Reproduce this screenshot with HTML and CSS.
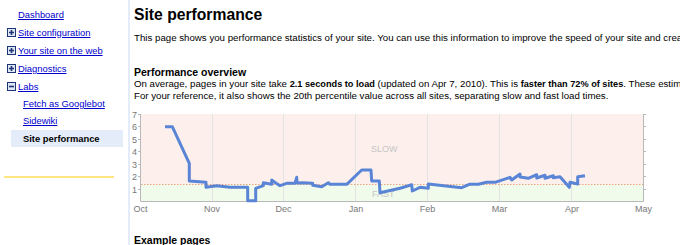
FILE: index.html
```html
<!DOCTYPE html>
<html>
<head>
<meta name="viewport" content="width=device-width, initial-scale=1">
<title>Site performance</title>
<link rel="stylesheet" href="styles.css">
</head>
<body>

<div class="layout">
  <div class="sidebar">
    <ul class="nav">
      <li class="nav-item no-icon"><a href="#">Dashboard</a></li>
      <li class="nav-item">
        <svg class="toggle" width="9" height="9" viewBox="0 0 9 9"><rect x="0.5" y="0.5" width="8" height="8" fill="#dfe6f5" stroke="#1c3573"/><path d="M2 4.5h5M4.5 2v5" stroke="#1c3573" stroke-width="1.6"/></svg>
        <a href="#">Site configuration</a>
      </li>
      <li class="nav-item">
        <svg class="toggle" width="9" height="9" viewBox="0 0 9 9"><rect x="0.5" y="0.5" width="8" height="8" fill="#dfe6f5" stroke="#1c3573"/><path d="M2 4.5h5M4.5 2v5" stroke="#1c3573" stroke-width="1.6"/></svg>
        <a href="#">Your site on the web</a>
      </li>
      <li class="nav-item">
        <svg class="toggle" width="9" height="9" viewBox="0 0 9 9"><rect x="0.5" y="0.5" width="8" height="8" fill="#dfe6f5" stroke="#1c3573"/><path d="M2 4.5h5M4.5 2v5" stroke="#1c3573" stroke-width="1.6"/></svg>
        <a href="#">Diagnostics</a>
      </li>
      <li class="nav-item">
        <svg class="toggle" width="9" height="9" viewBox="0 0 9 9"><rect x="0.5" y="0.5" width="8" height="8" fill="#dfe6f5" stroke="#1c3573"/><path d="M2 4.5h5" stroke="#1c3573" stroke-width="1.6"/></svg>
        <a href="#">Labs</a>
      </li>
    </ul>
    <ul class="subnav">
      <li><a href="#">Fetch as Googlebot</a></li>
      <li><a href="#">Sidewiki</a></li>
      <li class="selected">Site performance</li>
    </ul>
    <div class="divider"></div>
  </div>

  <div class="main">
    <h1>Site performance</h1>
    <p class="intro">This page shows you performance statistics of your site. You can use this information to improve the speed of your site and create a faster experience for your users.</p>

    <h3>Performance overview</h3>
    <p class="overview">On average, pages in your site take <b>2.1 seconds to load</b> (updated on Apr 7, 2010). This is <b>faster than 72% of sites</b>. These estimates are of low accuracy.<br>
    For your reference, it also shows the 20th percentile value across all sites, separating slow and fast load times.</p>

    <svg class="chart" width="540" height="114" viewBox="130 106 540 114">
      <!-- background bands -->
      <rect x="141" y="114" width="502" height="70" fill="#fdf0ec"/>
      <rect x="141" y="184" width="502" height="17" fill="#f1fbeb"/>
      <!-- month grid -->
      <g stroke="#e3e3e3" stroke-width="1">
        <line x1="212.5" y1="114" x2="212.5" y2="201"/>
        <line x1="283.5" y1="114" x2="283.5" y2="201"/>
        <line x1="355.5" y1="114" x2="355.5" y2="201"/>
        <line x1="427.5" y1="114" x2="427.5" y2="201"/>
        <line x1="499.5" y1="114" x2="499.5" y2="201"/>
        <line x1="571.5" y1="114" x2="571.5" y2="201"/>
      </g>
      <line x1="141" y1="184.5" x2="643" y2="184.5" stroke="#f0a080" stroke-dasharray="1.5,1.5"/>
      <!-- axes -->
      <g stroke="#b8b8b8" stroke-width="1">
        <line x1="140.5" y1="114" x2="140.5" y2="201.5"/>
        <line x1="140.5" y1="201.5" x2="643.5" y2="201.5"/>
        <line x1="643.5" y1="114" x2="643.5" y2="201.5"/>
        <path d="M138 114.5h3M138 126.5h3M138 139.5h3M138 151.5h3M138 164.5h3M138 176.5h3M138 189.5h3"/>
        <path d="M643 114.5h3M643 126.5h3M643 139.5h3M643 151.5h3M643 164.5h3M643 176.5h3M643 189.5h3"/>
      </g>
      <g class="axis-y" text-anchor="end">
        <text x="137" y="117.5">7</text>
        <text x="137" y="130">6</text>
        <text x="137" y="142.5">5</text>
        <text x="137" y="155">4</text>
        <text x="137" y="167.5">3</text>
        <text x="137" y="180">2</text>
        <text x="137" y="192.5">1</text>
      </g>
      <g class="axis-x" text-anchor="middle">
        <text x="140.5" y="211.5">Oct</text>
        <text x="212" y="211.5">Nov</text>
        <text x="283.5" y="211.5">Dec</text>
        <text x="356" y="211.5">Jan</text>
        <text x="427.5" y="211.5">Feb</text>
        <text x="499.5" y="211.5">Mar</text>
        <text x="572" y="211.5">Apr</text>
        <text x="643.5" y="211.5">May</text>
      </g>
      <text class="band-label" x="371" y="151.5">SLOW</text>
      <text class="band-label" x="372" y="196.5">FAST</text>
      <polyline class="series" points="165,126.7 172.3,126.7 189.3,163.3 189.3,181 206,182.3 206,187.3 216.7,185.7 230,187.3 247.7,187.3 247.7,200.7 255.7,200.7 255.7,188.3 263.3,185.7 263.3,182.7 271.7,184.3 271.7,180 274.7,182.3 280,185.7 286.7,183.3 295,183.3 296.7,177.3 297,183 302.7,182.7 312.7,183.3 312.7,185.3 321.7,186.7 328.3,182.7 330,184.3 346.7,184.3 361.7,170 371,170 371.7,181 379.3,181 380,192.7 400,188.3 411.7,184.7 412.3,191 420,187.3 428.3,188.3 428.3,184 461.7,187.7 469.3,184.3 478.3,184.3 486.7,182.3 495,182.3 510,177.3 511.7,180 520,174 520,177 528.3,178.3 536.7,174.7 536.7,178 545,175.3 545,178.3 553.3,175.7 553.3,177.7 560,176.7 569.3,187.3 570,182.3 577.7,184 577.7,176.7 585,175.7"/>
    </svg>

    <h3 class="examples">Example pages</h3>
  </div>
</div>

</body>
</html>
```

FILE: styles.css
```css
/* page */
body {
  margin: 0;
  font-family: "Liberation Sans", Arial, sans-serif;
  font-size: 9.4px;
  color: #000;
  background: #fff;
  overflow: hidden;
}

a {
  color: #0000cc;
  text-decoration: underline;
}

.layout {
  display: flex;
  height: 245px;
}

/* left navigation */
.sidebar {
  width: 128px;
  flex-shrink: 0;
  border-right: 2px solid #e5ecf9;
  padding-top: 5px;
}

.nav, .subnav {
  list-style: none;
  margin: 0;
  padding: 0;
}

.nav-item {
  display: flex;
  align-items: center;
  height: 18px;
  padding-left: 7px;
}

.nav-item.no-icon {
  padding-left: 18px;
}

.toggle {
  margin-right: 2px;
  flex-shrink: 0;
}

.subnav {
  margin-left: 11px;
  width: 112px;
}

.subnav li {
  display: flex;
  align-items: center;
  height: 17px;
  padding-left: 12px;
}

.subnav li.selected {
  margin-top: 1px;
  background-color: #e5ecf9;
  font-weight: bold;
}

.divider {
  height: 2px;
  margin: 29px 0 0 4px;
  width: 110px;
  background-color: #ffe680;
}

/* main content */
.main {
  flex: 1;
  padding-left: 4px;
  white-space: nowrap;
  overflow: hidden;
}

h1 {
  margin: 0;
  padding-top: 5px;
  font-size: 15.7px;
  line-height: 20px;
}

p {
  margin: 0;
  font-size: 9.7px;
  line-height: 12px;
}

p b {
  font-size: 9.2px;
}

.intro {
  margin-top: 7px;
}

h3 {
  margin: 22px 0 0;
  font-size: 10.5px;
  line-height: 12px;
}

.chart {
  display: block;
  margin: 4px 0 0 -4px;
}

.axis-y text, .axis-x text {
  font-family: "Liberation Sans", Arial, sans-serif;
  font-size: 9px;
  fill: #777;
}

.band-label {
  font-family: "Liberation Sans", Arial, sans-serif;
  font-size: 9px;
  fill: #c4c4c4;
}

.series {
  fill: none;
  stroke: #5a84d6;
  stroke-width: 3;
  stroke-linejoin: round;
}

h3.examples {
  margin-top: 14px;
}
```
